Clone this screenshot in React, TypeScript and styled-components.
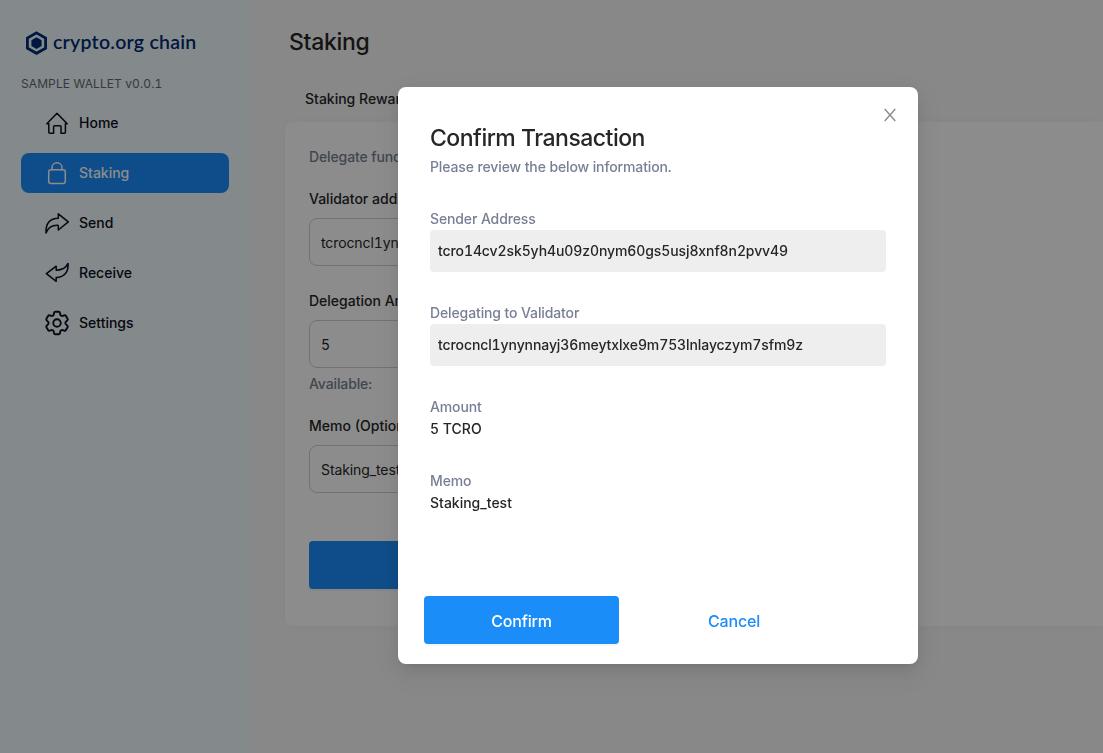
import React from 'react';
import styled, { createGlobalStyle, css } from 'styled-components';
import { HiOutlineCog6Tooth } from 'react-icons/hi2';

const GlobalStyle = createGlobalStyle`
  *, *::before, *::after { box-sizing: border-box; }
  body {
    margin: 0;
    overflow: hidden;
    font-family: Inter, 'Liberation Sans', sans-serif;
    font-size: 14px;
    line-height: 22px;
    font-weight: 500;
    font-feature-settings: 'tnum';
    color: #262626;
  }
  button, input { font: inherit; font-feature-settings: inherit; }
`;

const Layout = styled.div`
  display: flex;
  height: 100vh;
  min-height: 753px;
  background: #f7f7f7;
`;

const Sidebar = styled.aside`
  flex: 0 0 253px;
  padding: 30px 24px 0 21px;
  background: #f0f9fe;
`;

const Brand = styled.div`
  display: flex;
  align-items: center;
  gap: 5px;
  height: 26px;
  padding-left: 4px;
`;

const BrandName = styled.span`
  margin-top: -2px;
  font-family: Lato, sans-serif;
  font-size: 19.5px;
  line-height: 24px;
  font-weight: 600;
  letter-spacing: 0.25px;
  color: #002d74;
  white-space: nowrap;
`;

const Version = styled.div`
  margin-top: 18px;
  font-size: 12px;
  line-height: 20px;
  font-weight: 400;
  letter-spacing: 0.1px;
  color: #626973;
`;

const Menu = styled.nav`
  display: flex;
  flex-direction: column;
  gap: 10px;
  margin-top: 9px;
`;

const MenuItem = styled.a<{ $active?: boolean }>`
  display: flex;
  align-items: center;
  gap: 10px;
  width: 208px;
  height: 40px;
  padding-left: 24px;
  border-radius: 8px;
  color: #0b0f1c;
  ${({ $active }) => $active && css`
    background: #1b8df9;
    color: #fff;
  `}
`;

const MenuIcon = styled.svg`
  flex: none;
  width: 24px;
  height: 24px;
  fill: none;
  stroke: currentColor;
  stroke-width: 1.5;
  stroke-linejoin: round;
  stroke-linecap: round;
`;

const GearSlot = styled.span`
  display: flex;
  justify-content: center;
  width: 24px;
  svg { flex: none; }
`;

const Content = styled.main`
  flex: 1;
  min-width: 0;
  padding: 24px 0 0 32px;
`;

const PageTitle = styled.h1`
  margin: 0 0 0 4px;
  font-size: 23px;
  line-height: 36px;
  font-weight: 500;
  letter-spacing: -0.3px;
`;

const Tabs = styled.div`
  display: flex;
  height: 46px;
  margin-top: 16px;
  padding: 12px 20px 0;
`;

const Card = styled.section`
  height: 504px;
  padding: 24px;
  background: #fff;
  border-radius: 8px 0 0 8px;
  box-shadow: 0 0 12px rgba(0, 0, 0, 0.02);
`;

const Muted = styled.div`
  letter-spacing: -0.12px;
  color: #777f95;
`;

const Field = styled.div<{ $top: number }>`
  margin-top: ${({ $top }) => $top}px;
`;

const Input = styled.input`
  display: block;
  width: 400px;
  height: 48px;
  margin: 8px 0 5px;
  padding: 4px 11px;
  border: 1px solid #d0d0d0;
  border-radius: 8px;
  background: #fff;
  font-weight: 400;
  letter-spacing: -0.1px;
  color: #262626;
`;

const Submit = styled.button`
  display: block;
  width: 400px;
  height: 48px;
  margin-top: 48px;
  border: 0;
  border-radius: 4px;
  background: #1b8df9;
  box-shadow: 0 2px 0 rgba(0, 0, 0, 0.04);
`;

const Mask = styled.div`
  position: fixed;
  inset: 0;
  display: flex;
  justify-content: center;
  align-items: flex-start;
  padding: 87px 0 0 213px;
  background: rgba(0, 0, 0, 0.45);
`;

const Dialog = styled.div`
  position: relative;
  width: 520px;
  height: 577px;
  padding: 34px 32px 0;
  background: #fff;
  border-radius: 8px;
  box-shadow: 0 3px 6px -4px rgba(0, 0, 0, 0.12), 0 6px 16px rgba(0, 0, 0, 0.08),
    0 9px 28px 8px rgba(0, 0, 0, 0.05);
`;

const Close = styled.button`
  position: absolute;
  top: 20px;
  right: 20px;
  display: flex;
  padding: 0;
  border: 0;
  background: none;
  color: #8c8c8c;
`;

const DialogTitle = styled.h2`
  margin: 0;
  font-size: 23px;
  line-height: 35px;
  font-weight: 500;
  letter-spacing: -0.5px;
`;

const Detail = styled.div`
  margin-top: 30px;
`;

const Address = styled.div`
  height: 42px;
  padding: 10px 8px;
  border-radius: 4px;
  background: #eee;
  letter-spacing: -0.1px;
`;

const Actions = styled.div`
  display: flex;
  gap: 18px;
  margin: 82px 0 0 -6px;
`;

const Action = styled.button<{ $primary?: boolean }>`
  width: ${({ $primary }) => ($primary ? 195 : 194)}px;
  height: 48px;
  padding: 2px 0 0;
  border: 0;
  border-radius: 4px;
  font-size: 16px;
  letter-spacing: -0.15px;
  background: ${({ $primary }) => ($primary ? '#1b8df9' : 'transparent')};
  color: ${({ $primary }) => ($primary ? '#fff' : '#1b8df9')};
  box-shadow: ${({ $primary }) => ($primary ? '0 2px 0 rgba(0, 0, 0, 0.04)' : 'none')};
`;

export default function App() {
  return (
    <>
      <GlobalStyle />
      <Layout>
        <Sidebar>
          <Brand>
            <svg width="23" height="24" viewBox="0 0 23 24">
              <path d="M11.5 1.9 L20.6 7 V17.2 L11.5 22.3 L2.4 17.2 V7 Z" fill="none" stroke="#002d74" strokeWidth="2.8" />
              <path d="M11.5 6.3 L16.6 9.2 V15 L11.5 17.9 L6.4 15 V9.2 Z" fill="#002d74" />
            </svg>
            <BrandName>crypto.org chain</BrandName>
          </Brand>
          <Version>SAMPLE WALLET v0.0.1</Version>
          <Menu>
            <MenuItem>
              <MenuIcon viewBox="0 0 24 24">
                <path d="M1.8 12.8 L12 2.2 L22.2 12.8 H20.4 V21.2 Q20.4 22.2 19.4 22.2 H16 V15.8 Q16 14.8 15 14.8 H9.6 Q8.6 14.8 8.6 15.8 V22.2 H4.8 Q3.8 22.2 3.8 21.2 V12.8 Z" />
              </MenuIcon>
              Home
            </MenuItem>
            <MenuItem $active>
              <MenuIcon viewBox="0 0 24 24">
                <rect x="3.7" y="8.8" width="16.6" height="13.6" rx="2.2" />
                <path d="M7 8.8 V6.5 A5 4.7 0 0 1 17 6.5 V8.8" />
              </MenuIcon>
              Staking
            </MenuItem>
            <MenuItem>
              <MenuIcon viewBox="0 0 24 24">
                <path d="M13.3 2.8 L23.3 10.9 L13.3 19 V14.4 C7.5 14 3.5 15.8 1 22 C0.6 12.5 4.8 7.2 13.3 7.2 Z" />
              </MenuIcon>
              Send
            </MenuItem>
            <MenuItem>
              <MenuIcon viewBox="0 0 24 24">
                <path d="M11.2 5.2 L1.4 12.7 L11.2 20.3 V16.6 C19.5 16.2 23.7 11 23 2.4 C20.8 7.4 17.4 9 11.2 9.2 Z" />
              </MenuIcon>
              Receive
            </MenuItem>
            <MenuItem>
              <GearSlot>
                <HiOutlineCog6Tooth size={30} />
              </GearSlot>
              Settings
            </MenuItem>
          </Menu>
        </Sidebar>
        <Content>
          <PageTitle>Staking</PageTitle>
          <Tabs>Staking Rewards</Tabs>
          <Card>
            <Muted>Delegate funds</Muted>
            <Field $top={20}>
              Validator address
              <Input defaultValue="tcrocncl1ynynnayj36meytxlxe9m753lnlayczym7sfm9z" />
            </Field>
            <Field $top={24}>
              Delegation Amount
              <Input defaultValue="5" />
              <Muted>Available:</Muted>
            </Field>
            <Field $top={20}>
              Memo (Optional)
              <Input defaultValue="Staking_test" />
            </Field>
            <Submit />
          </Card>
        </Content>
      </Layout>
      <Mask>
        <Dialog role="dialog">
          <Close aria-label="Close">
            <svg width="16" height="16" viewBox="0 0 16 16" fill="none" stroke="currentColor" strokeWidth="1.4">
              <path d="M2.7 2 L13.3 14 M13.3 2 L2.7 14" />
            </svg>
          </Close>
          <DialogTitle>Confirm Transaction</DialogTitle>
          <Muted>Please review the below information.</Muted>
          <Detail>
            <Muted>Sender Address</Muted>
            <Address>tcro14cv2sk5yh4u09z0nym60gs5usj8xnf8n2pvv49</Address>
          </Detail>
          <Detail>
            <Muted>Delegating to Validator</Muted>
            <Address>tcrocncl1ynynnayj36meytxlxe9m753lnlayczym7sfm9z</Address>
          </Detail>
          <Detail>
            <Muted>Amount</Muted>
            <div>5 TCRO</div>
          </Detail>
          <Detail>
            <Muted>Memo</Muted>
            <div>Staking_test</div>
          </Detail>
          <Actions>
            <Action $primary>Confirm</Action>
            <Action>Cancel</Action>
          </Actions>
        </Dialog>
      </Mask>
    </>
  );
}
